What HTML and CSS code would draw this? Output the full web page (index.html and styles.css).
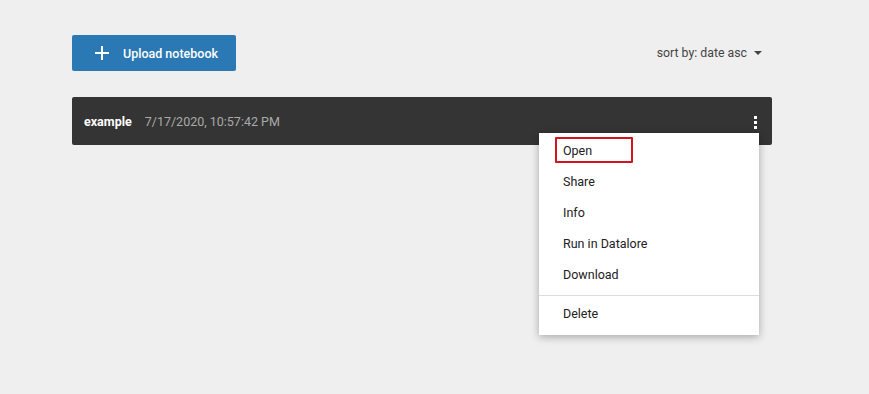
FILE: index.html
```html
<!DOCTYPE html>
<html>
<head>
<meta charset="utf-8">
<link rel="stylesheet" href="styles.css">
</head>
<body>
<div class="page">
  <div class="toolbar">
    <button class="upload">
      <svg class="plus" width="14" height="14" viewBox="0 0 14 14"><path d="M7 0v14M0 7h14" stroke="#fff" stroke-width="2"/></svg>
      <span>Upload notebook</span>
    </button>
    <div class="sort">sort by: date asc <span class="caret"></span></div>
  </div>
  <div class="row">
    <span class="name">example</span>
    <span class="date">7/17/2020, 10:57:42 PM</span>
    <span class="kebab"><i></i><i></i><i></i></span>
    <div class="menu">
      <div class="item open"><span class="hl"></span>Open</div>
      <div class="item">Share</div>
      <div class="item">Info</div>
      <div class="item">Run in Datalore</div>
      <div class="item">Download</div>
      <div class="divider"></div>
      <div class="item">Delete</div>
    </div>
  </div>
</div>
</body>
</html>
```
FILE: styles.css
```css
html, body {
  margin: 0;
  padding: 0;
  background: #efefef;
  font-family: Roboto, "Noto Sans", sans-serif;
}
.page {
  box-sizing: border-box;
  min-height: 394px;
  padding: 35px 97px 0 72px;
}
.toolbar {
  display: flex;
  align-items: center;
  justify-content: space-between;
  height: 36px;
}
.upload {
  display: flex;
  align-items: center;
  width: 164px;
  height: 36px;
  padding: 0 0 0 23px;
  border: none;
  border-radius: 2px;
  background: #2a79b4;
  color: #fff;
  font-family: inherit;
  font-size: 12.5px;
  font-weight: 500;
  cursor: pointer;
}
.plus { margin-right: 14px; }
.sort {
  display: flex;
  align-items: center;
  font-size: 12.3px;
  color: #444;
  padding-right: 10px;
}
.caret {
  margin-left: 7px;
  width: 0;
  height: 0;
  border-left: 4px solid transparent;
  border-right: 4px solid transparent;
  border-top: 4px solid #444;
}
.row {
  position: relative;
  display: flex;
  align-items: center;
  height: 48px;
  margin-top: 26px;
  padding: 0 12px;
  background: #343434;
  border-radius: 2px;
  font-size: 12.5px;
}
.name {
  color: #fff;
  font-weight: 700;
  margin-right: 13px;
}
.date { color: #aaa; }
.kebab {
  margin-left: auto;
  display: flex;
  flex-direction: column;
  gap: 2px;
  margin-right: 3px;
  margin-top: 2px;
}
.kebab i {
  display: block;
  width: 3px;
  height: 3px;
  background: #fff;
}
.menu {
  position: absolute;
  top: 36px;
  left: 467px;
  width: 220px;
  padding: 2px 0 6px;
  background: #fff;
  box-shadow: 0 2px 8px rgba(0,0,0,0.3);
  z-index: 2;
}
.item {
  position: relative;
  height: 31px;
  line-height: 31px;
  padding-left: 24px;
  font-size: 12.5px;
  color: #222;
}
.hl {
  position: absolute;
  left: 16px;
  top: 2px;
  width: 74px;
  height: 22px;
  border: 2px solid #d5121f;
  border-radius: 1px;
}
.divider {
  height: 1px;
  background: #ddd;
  margin: 5px 0 2px;
}
```
